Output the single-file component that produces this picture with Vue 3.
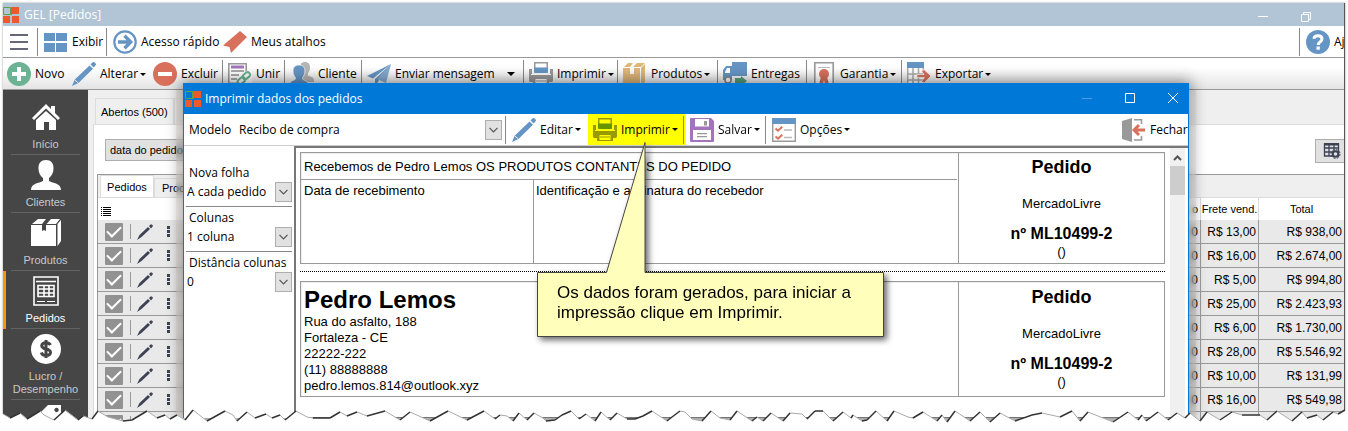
<script setup>
import { ref } from 'vue'

const actions = [
  { icon: 'plus', label: 'Novo' },
  { icon: 'pencil', label: 'Alterar', menu: true },
  { icon: 'minus', label: 'Excluir' },
  { icon: 'merge', label: 'Unir', sep: true },
  { icon: 'people', label: 'Cliente', sep: true },
  { icon: 'plane', label: 'Enviar mensagem', sep: true, menu: true, wide: true },
  { icon: 'printer', label: 'Imprimir', sep: true, menu: true },
  { icon: 'carton', label: 'Produtos', sep: true, menu: true },
  { icon: 'truck', label: 'Entregas', sep: true },
  { icon: 'seal', label: 'Garantia', sep: true, menu: true },
  { icon: 'export', label: 'Exportar', sep: true, menu: true },
]

const sections = [
  { icon: 'home', label: 'Início' },
  { icon: 'user', label: 'Clientes' },
  { icon: 'box', label: 'Produtos' },
  { icon: 'form', label: 'Pedidos', active: true },
  { icon: 'dollar', label: 'Lucro / Desempenho' },
  { icon: 'tag', label: '' },
]

const orders = [
  ['R$ 13,00', 'R$ 938,00'],
  ['R$ 16,00', 'R$ 2.674,00'],
  ['R$ 5,00', 'R$ 994,80'],
  ['R$ 25,00', 'R$ 2.423,93'],
  ['R$ 6,00', 'R$ 1.730,00'],
  ['R$ 28,00', 'R$ 5.546,92'],
  ['R$ 10,00', 'R$ 131,99'],
  ['R$ 16,00', 'R$ 549,98'],
  ['', ''],
]

const dialogActions = [
  { icon: 'pencil', label: 'Editar' },
  { icon: 'printer', label: 'Imprimir', hot: true },
  { icon: 'floppy', label: 'Salvar' },
  { icon: 'options', label: 'Opções' },
]

const settings = [
  { id: 'sheet', label: 'Nova folha', value: 'A cada pedido' },
  { id: 'cols', label: 'Colunas', value: '1 coluna' },
  { id: 'dist', label: 'Distância colunas', value: '0' },
]

const address = ['Rua do asfalto, 188', 'Fortaleza - CE', '22222-222', '(11) 88888888', 'pedro.lemos.814@outlook.xyz']

const model = ref('Recibo de compra')

const tear = '3,414 10,418 20,413 27,419 40,411 44,415 54,420 65,410 78,420 83,416 92,419 98,411 108,417 123,421 132,420 147,411 157,418 165,415 170,419 177,415 185,420 193,410 207,421 225,411 233,415 237,421 247,412 255,418 266,414 272,418 280,415 285,420 296,411 307,417 313,418 330,418 340,412 347,416 357,412 367,416 385,411 400,420 410,412 430,421 448,411 467,420 484,411 495,419 500,415 507,416 513,421 519,413 527,420 534,413 543,418 546,421 555,420 562,415 571,411 579,419 586,414 595,421 601,412 610,420 617,413 627,419 635,419 643,416 652,411 667,421 672,417 680,411 685,412 692,419 702,421 711,411 720,418 730,420 737,411 752,421 757,417 763,421 771,413 783,421 790,413 802,414 807,419 815,411 823,411 833,421 843,412 851,418 853,415 862,421 867,420 876,411 887,421 894,411 908,417 913,418 923,412 937,421 942,415 947,422 955,411 970,421 980,412 990,422 1000,413 1015,421 1032,415 1042,413 1060,417 1072,411 1080,421 1088,412 1113,422 1128,412 1138,420 1142,415 1146,421 1158,412 1168,420 1177,413 1185,418 1190,413 1200,421 1207,412 1220,420 1232,412 1242,415 1260,415 1267,420 1277,411 1292,421 1302,412 1307,418 1317,415 1323,420 1333,412 1338,414 1345,410'
  .split(' ')
  .map((p) => p.split(',').map(Number))
  .map(([x, y]) => [x, y - 407])

const tearFill = `M0 7L${tear.map((p) => p.join(' ')).join('L')}L1348 3V24H0Z`
const segments = tear.slice(1).map((p, i) => ({ d: `M${tear[i].join(' ')}L${p.join(' ')}`, up: p[1] <= tear[i][1] }))
const rising = segments.filter((s) => s.up).map((s) => s.d).join('')
const falling = segments.filter((s) => !s.up).map((s) => s.d).join('')
</script>

<template>
  <svg class="defs" aria-hidden="true">
    <symbol id="i-logo" viewBox="0 0 16 16">
      <path fill="#ec5a2b" d="M8 0h8v7H9V8H8zM0 9h7v7H0zM9 9h7v7H9z" />
      <path fill="none" stroke="#5fa04a" d="M.5.5h7v7h-7z" />
    </symbol>
    <symbol id="i-tiles" viewBox="0 0 24 24"><path fill="#6595c4" d="M0 3h11v8H0zM12 3h11v8H12zM0 13h11v9H0zM12 13h11v9H12z" /></symbol>
    <symbol id="i-go" viewBox="0 0 24 24">
      <circle cx="12" cy="12" r="10.7" fill="none" stroke="#6595c4" stroke-width="2.2" />
      <path fill="none" stroke="#6595c4" stroke-width="3.4" d="M5 12h12M11.500 5.800l6.200 6.200-6.200 6.200" />
    </symbol>
    <symbol id="i-ribbon" viewBox="0 0 24 24"><path fill="#d9705c" d="M17 1l7 6L8 23l-1.500-6L0 15.500z" /></symbol>
    <symbol id="i-help" viewBox="0 0 24 24">
      <circle cx="12" cy="12" r="12" fill="#6595c4" />
      <path fill="none" stroke="#fff" stroke-width="3" d="M8 8.800C8 6.800 9.500 5.800 12 5.800s4 1.200 4 3.200c0 3-3.800 2.800-3.800 6" />
      <path fill="#fff" d="M10.500 16.500h3.300v3.200h-3.300z" />
    </symbol>
    <symbol id="i-plus" viewBox="0 0 24 24"><circle cx="12" cy="12" r="12" fill="#6bb392" /><path fill="#fff" d="M10 5h4v5h5v4h-5v5h-4v-5H5v-4h5z" /></symbol>
    <symbol id="i-minus" viewBox="0 0 24 24"><circle cx="12" cy="12" r="12" fill="#d9705c" /><path fill="#fff" d="M5 10h14v4H5z" /></symbol>
    <symbol id="i-pencil" viewBox="0 0 24 24">
      <path fill="#6595c4" d="M17.500 3.500l3.500 3.200L6.500 21 0 24l2.600-6.200zM18.500 2.500L20.300.6c.8-.8 1.700-.7 2.500 0l.6.600c.8.800.8 1.600 0 2.400L21.700 5.500z" />
      <path stroke="#fff" stroke-width=".8" d="M2.600 17.800l3.800 3.200" />
    </symbol>
    <symbol id="i-merge" viewBox="0 0 24 24">
      <path fill="#fff" stroke="#999" stroke-width="1.600" d="M.8 1.800h17.400v19.400H.8z" />
      <path stroke="#a374b9" stroke-width="3" d="M3 5h13" />
      <path stroke="#aaa" stroke-width="2" d="M3 9h13M3 13h8M3 17h6" />
      <path fill="#fff" d="M9 24l9-15h6v15z" />
      <g fill="none" stroke="#6bb392" stroke-width="2"><rect x="14.500" y="11.500" width="8" height="5" rx="2.500" transform="rotate(-40 18 14)" /><rect x="9.500" y="16.500" width="8" height="5" rx="2.500" transform="rotate(-40 13 19)" /></g>
    </symbol>
    <symbol id="i-people" viewBox="0 0 24 24">
      <path fill="#b5b5b5" d="M15 0c3.500 0 5 2.300 5 5.500 0 3-1 4.500-2 6v2c3 1.500 6 1.500 6 5V20H11V1.500C12 .5 13.500 0 15 0z" />
      <path fill="#6595c4" stroke="#f5f5f5" stroke-width=".8" d="M9 3c4 0 6 2.500 6 6 0 3-1.200 5-2.300 6.200v2C15 19 19 19 19 24H-1c0-5 4-5 6.300-6.800v-2C4 14 3 12 3 9c0-3.500 2-6 6-6z" />
    </symbol>
    <symbol id="i-plane" viewBox="0 0 24 24"><path fill="#6595c4" d="M24 2L0 14l6 2.500zM24 2L8 17v7l3.500-5z" /><path fill="#86abd0" d="M24 2l-5 19-9-4z" /></symbol>
    <symbol id="i-printer" viewBox="0 0 24 24">
      <path fill="#999" d="M5 0h14v9H5zM0 7h3v5h18V7h3v11c0 1.500-.5 2-2 2h-2v3H4v-3H2c-1.500 0-2-.5-2-2z" />
      <path fill="#fff" d="M6.500 1.500h11V6h-11zM2 12h20v1H2zM6 17h12v5H6z" />
      <path fill="#6595c4" d="M5 5.500h14V10q0 1-1 1H6q-1 0-1-1z" />
      <path fill="none" stroke="#999" d="M7 19h10M6 16.500h12v6H6z" />
    </symbol>
    <symbol id="i-carton" viewBox="0 0 24 24">
      <path fill="#e0b679" d="M1 5L5 1h5L7 5zM10 5l4-4h8l-4 4zM0 6h7v6h4V6h6v18H0zM18 6l4-4v18l-4 4z" />
    </symbol>
    <symbol id="i-truck" viewBox="0 0 24 24">
      <path fill="#6595c4" d="M9 0h15v14H9zM0 8l3-4h6v14H0z" />
      <path fill="#fff" d="M2 10l2-4h3v5H2z" />
      <circle cx="5" cy="18" r="3" fill="#fff" stroke="#888" stroke-width="1.600" />
      <path fill="#57a07b" d="M12 16h6v-2l6 5-6 5v-3h-6z" />
    </symbol>
    <symbol id="i-seal" viewBox="0 0 24 24">
      <path fill="#fff" stroke="#999" stroke-width="1.600" d="M2.800.8h18.400v22.400H2.800z" />
      <path stroke="#bbb" d="M6 5.500h12" />
      <circle cx="12" cy="12" r="5" fill="#d9705c" /><path fill="#d9705c" d="M9 15h6l2 7-2-1-2 1-1-4-1 4-2-1-2 1z" />
    </symbol>
    <symbol id="i-export" viewBox="0 0 24 24">
      <path fill="#6595c4" d="M0 0h17v6H0z" /><path fill="#fff" d="M0 6h17v18H0z" />
      <path fill="none" stroke="#aaa" stroke-width="1.500" d="M.7 6v18M6 6v18M11.500 6v18M16.300 6v5M0 12h16M0 18h16" />
      <path fill="#d9705c" stroke="#fff" stroke-width=".7" d="M10 12.500h7L14.500 9 17 7.500l7 6.500-7 7-2.500-1.500 3-4H10z" />
    </symbol>
    <symbol id="i-floppy" viewBox="0 0 24 24">
      <path fill="#a374b9" d="M0 1q0-1 1-1h20l3 3v20q0 1-1 1H1q-1 0-1-1z" />
      <path fill="#fff" d="M5 1h14v7.500H5zM3 12h18v10H3z" />
      <path fill="#999" d="M14 3h3v4.500h-3zM7 15h10v1.200H7zM7 18h10v1.200H7z" />
    </symbol>
    <symbol id="i-options" viewBox="0 0 24 24">
      <path fill="#fff" stroke="#999" stroke-width="1.400" d="M.7 1h22.600v22.300H.7z" /><path fill="#6595c4" d="M0 0h24v6H0z" />
      <path fill="none" stroke="#d9705c" stroke-width="2" d="M3.500 10.500l2.500 2.200 4.200-4M3.500 18.500L6 20.700l4.200-4" />
      <path stroke="#bbb" stroke-width="1.300" d="M12 12h8M12 19.500h8" />
    </symbol>
    <symbol id="i-exit" viewBox="0 0 24 24">
      <path fill="#999" d="M0 3l10-3v24L0 21z" />
      <path fill="none" stroke="#999" stroke-width="1.600" d="M12 1.800h7.500V6M19.500 18v4H12" />
      <path fill="none" stroke="#d9705c" stroke-width="3" d="M13 12h10M17 7l-5 5 5 5" />
    </symbol>
    <symbol id="i-home" viewBox="0 0 30 30"><path fill="#fff" d="M15 2l5 5V4h4v7l5 5-2 2L15 6.500 3 18l-2-2zM15 9l10 9v10h-7v-8h-5v8H5V18z" /></symbol>
    <symbol id="i-user" viewBox="0 0 30 30"><path fill="#fff" d="M15 0c5 0 7.500 3 7.500 8 0 5-2 8-4.500 10v3c4 2.500 12 2 12 9H0c0-7 8-6.500 12-9v-3C9.500 16 7.500 13 7.500 8c0-5 2.500-8 7.500-8z" /></symbol>
    <symbol id="i-box" viewBox="0 0 30 30"><path fill="#fff" d="M1 6l6-5h8l-4 5zM16 5.500L20 1h9l-4 5h-9.500zM0 7h11v6l2-1 2 1V7h10v21H0zM26.500 6L30 2v21l-3.500 5z" /></symbol>
    <symbol id="i-form" viewBox="0 0 30 30">
      <path fill="none" stroke="#fff" stroke-width="1.600" d="M3 1h24v28H3zM5 5.500h20M7 9.500h16v11H7zM7 13h16M7 17h16M13 9v11M18 9v11" /><path stroke="#fff" d="M6 25.500h8M16 25.500h8" />
    </symbol>
    <symbol id="i-dollar" viewBox="0 0 30 30">
      <circle cx="15" cy="15" r="15" fill="#fff" />
      <path fill="none" stroke="#464646" stroke-width="3" d="M19.500 11c-1-1.800-2.500-2.300-4.500-2.300-2.500 0-4.300 1-4.300 3 0 4.400 8.800 2.200 8.800 6.600 0 2-2 3.200-4.500 3.200-2.200 0-4-.8-4.700-3M15 6v18" />
    </symbol>
    <symbol id="i-tag" viewBox="0 0 30 30"><path fill="#fff" fill-rule="evenodd" d="M17 0h13v12L13 29 0 17zM25.500 2.800a2.200 2.200 0 1 0 .1 0z" /></symbol>
    <symbol id="i-table" viewBox="0 0 18 18">
      <path fill="none" stroke="#3c4254" stroke-width="1.300" d="M1.500 2h14v12h-14zM6 2v12M11 2v12M1.500 6h14M1.500 10h14" /><path fill="#3c4254" d="M1 1h15v2.500H1z" />
      <circle cx="12.500" cy="12" r="2.800" fill="#e1e1e1" stroke="#3c4254" stroke-width="2" /><circle cx="12.500" cy="12" r="4.500" fill="none" stroke="#3c4254" stroke-dasharray="2 1.500" />
    </symbol>
    <symbol id="i-pen" viewBox="0 0 16 16"><path fill="#3c4254" d="M11 3L13 5 4.500 13 0 16l2.500-5zM12 2L13.500.5h1.500L16 2l-2 2.500z" /></symbol>
    <symbol id="i-chev" viewBox="0 0 9 6"><path fill="none" stroke="#555" stroke-width="1.200" d="M.5.8l4 4 4-4" /></symbol>
  </svg>

  <div class="page">
    <div class="app">
      <header class="titlebar">
        <svg class="logo"><use href="#i-logo" /></svg>
        <span class="title">GEL [Pedidos]</span>
        <svg class="winctl" viewBox="0 0 86 23"><path fill="none" stroke="#fff" d="M0 13.500h10M43.500 11.500h7v7h-7zM45.500 11.500v-2h7v7h-2" /></svg>
      </header>

      <nav class="bar top">
        <button class="tool burger" aria-label="Menu"><i></i><i></i><i></i></button>
        <button class="tool sep"><svg class="ic"><use href="#i-tiles" /></svg>Exibir</button>
        <button class="tool sep"><svg class="ic"><use href="#i-go" /></svg>Acesso rápido</button>
        <button class="tool"><svg class="ic"><use href="#i-ribbon" /></svg>Meus atalhos</button>
        <span></span>
        <button class="tool sep help"><svg class="ic"><use href="#i-help" /></svg>Aj</button>
      </nav>

      <nav class="bar actions">
        <button v-for="a in actions" :key="a.label" class="tool" :class="{ sep: a.sep }">
          <svg class="ic"><use :href="'#i-' + a.icon" /></svg>{{ a.label }}<b v-if="a.menu" class="caret" :class="{ wide: a.wide }"></b>
        </button>
      </nav>

      <div class="body">
        <aside class="side">
          <a v-for="s in sections" :key="s.icon" href="#" class="item" :class="{ active: s.active }">
            <svg class="big"><use :href="'#i-' + s.icon" /></svg>
            <span>{{ s.label }}</span>
          </a>
        </aside>

        <main class="main">
          <div class="tabs"><button class="tab">Abertos (500)</button><span class="tab stub"></span></div>
          <section class="panel">
            <div class="filters">
              <button class="filter">data do pedido</button>
              <button class="gridbtn" aria-label="Colunas"><svg><use href="#i-table" /></svg></button>
            </div>
            <div class="list">
              <div class="subtabs"><button class="sub on">Pedidos</button><button class="sub">Produtos</button></div>
              <table>
                <colgroup><col class="c-tools" /><col /><col class="c-freight" /><col class="c-total" /></colgroup>
                <thead>
                  <tr>
                    <th class="first"><svg class="lines" viewBox="0 0 10 9"><path stroke="#000" d="M0 .5h1M0 2.500h1M0 4.500h1M0 6.500h1M0 8.500h1M2 .5h8M2 2.500h8M2 4.500h8M2 6.500h8M2 8.500h8" /></svg></th>
                    <th class="num">o</th><th>Frete vend.</th><th>Total</th>
                  </tr>
                </thead>
                <tbody>
                  <tr v-for="(o, i) in orders" :key="i">
                    <td class="first">
                      <div class="rowtools">
                        <input type="checkbox" checked aria-label="Selecionar pedido" /><i></i>
                        <svg class="pen"><use href="#i-pen" /></svg><span class="dots"></span>
                      </div>
                    </td>
                    <td class="num">0</td><td class="num">{{ o[0] }}</td><td class="num">{{ o[1] }}</td>
                  </tr>
                </tbody>
              </table>
            </div>
          </section>
        </main>
      </div>
    </div>

    <section class="dialog" role="dialog" aria-label="Imprimir dados dos pedidos">
      <header class="dtitle">
        <svg class="logo"><use href="#i-logo" /></svg>
        <span>Imprimir dados dos pedidos</span>
        <svg class="winctl" viewBox="0 0 106 31"><path stroke="#4ba0e3" d="M0 15.500h10" /><path fill="none" stroke="#fff" d="M43.500 10.500h9v9h-9zM86 10l10 10M96 10l-10 10" /></svg>
      </header>
      <div class="dbar">
        <label for="model">Modelo</label>
        <div class="pick model">
          <select id="model" v-model="model"><option>Recibo de compra</option></select>
          <span class="drop"><svg><use href="#i-chev" /></svg></span>
        </div>
        <button v-for="a in dialogActions" :key="a.label" class="tool sep" :class="{ hot: a.hot }">
          <svg class="ic"><use :href="'#i-' + a.icon" /></svg>{{ a.label }}<b class="caret"></b>
        </button>
        <span></span>
        <button class="tool close"><svg class="ic"><use href="#i-exit" /></svg>Fechar</button>
      </div>

      <div class="dbody">
        <form class="form">
          <div v-for="s in settings" :key="s.id" class="group">
            <label :for="s.id">{{ s.label }}</label>
            <div class="pick">
              <select :id="s.id"><option>{{ s.value }}</option></select>
              <span class="drop"><svg><use href="#i-chev" /></svg></span>
            </div>
          </div>
        </form>
        <div class="preview">
          <div class="sheet">
            <div class="receipt">
              <div class="left">
                <p class="line">Recebemos de Pedro Lemos OS PRODUTOS CONTANTES DO PEDIDO</p>
                <div class="split"><p>Data de recebimento</p><p>Identificação e assinatura do recebedor</p></div>
              </div>
              <div class="order"><h3>Pedido</h3><p>MercadoLivre</p><h4>nº ML10499-2</h4><p>()</p></div>
            </div>
            <hr />
            <div class="receipt second">
              <div class="left who"><h2>Pedro Lemos</h2><p v-for="l in address" :key="l">{{ l }}</p></div>
              <div class="order"><h3>Pedido</h3><p>MercadoLivre</p><h4>nº ML10499-2</h4><p>()</p></div>
            </div>
          </div>
          <div class="scroll">
            <svg viewBox="0 0 15 18"><path fill="none" stroke="#555" stroke-width="2" d="M4 12l3.500-3.500L11 12" /></svg>
            <div class="thumb"></div>
          </div>
        </div>
      </div>
    </section>

    <div class="callout">
      <svg viewBox="0 0 350 200"><path d="M.5 130.500H69.500L108 .5V130.500H346.500V194.500H.5Z" /></svg>
      <p>Os dados foram gerados, para iniciar a impressão clique em Imprimir.</p>
    </div>

    <svg class="tear" viewBox="0 0 1348 24" preserveAspectRatio="none">
      <path class="fill" :d="tearFill" /><path class="falling" :d="falling" /><path class="rising" :d="rising" />
    </svg>
  </div>
</template>

<style>
body { background: #fff; }
</style>

<style scoped>
* { box-sizing: border-box; }
p, h2, h3, h4 { margin: 0; }
button, select { font: inherit; color: inherit; background: none; border: 0; padding: 0; margin: 0; white-space: nowrap; }
.defs { position: absolute; width: 0; height: 0; }
.page { position: relative; height: 100vh; min-height: 431px; padding: 3px 3px 0; overflow: hidden; background: #fff; font: 12px/16px "Open Sans", "Noto Sans", sans-serif; color: #000; }
.app { display: flex; flex-direction: column; height: 100%; overflow: hidden; border-right: 1px solid #555; box-shadow: 0 0 2px #999; }

.titlebar { display: flex; align-items: center; flex: none; height: 23px; background: #b1c5d7; color: #fff; }
.logo { width: 16px; height: 16px; flex: none; }
.title { margin-left: 5px; flex: 1; }
.winctl { flex: none; width: 86px; height: 23px; }

.bar { display: grid; flex: none; height: 32px; border-bottom: 1px solid #999; background: #fff; overflow: hidden; }
.top { grid-template-columns: 34px 69px 110px 110px 1fr 45px; }
.actions { grid-template-columns: 63px 81px 75px 62px 77px 162px 94px 100px 89px 95px 100px; background: linear-gradient(#fff 30%, #e4e4e4); }
.tool { display: flex; align-items: center; gap: 4px; height: 28px; margin-top: 2px; padding-left: 6px; border-left: 1px solid transparent; }
.tool.sep { border-left-color: #888; }
.tool.burger { flex-direction: column; align-items: flex-start; justify-content: center; gap: 5px; }
.burger i { width: 18px; height: 2px; background: #666a78; }
.actions .tool:first-child { padding-left: 3px; }
.actions .tool { padding-left: 5px; }
.ic { width: 24px; height: 24px; flex: none; }
.caret { flex: none; border: 3px solid transparent; border-top-color: #000; border-bottom: 0; margin-left: -2px; }
.caret.wide { border-width: 4px 4px 0; margin-left: 8px; }
.help { overflow: hidden; }

.body { display: flex; flex: 1; min-height: 0; }
.side { flex: none; width: 85px; padding-top: 7px; background: #464646; overflow: hidden; }
.item { display: flex; flex-direction: column; align-items: center; position: relative; min-height: 58px; padding: 5px 7px 4px; color: #c9c9c9; text-decoration: none; text-align: center; font: 11px/13px "Liberation Sans", Arial, sans-serif; }
.item::after { content: ""; position: absolute; left: 8px; right: 8px; bottom: 0; height: 1px; background: #626262; }
.item.active { color: #fff; border-left: 3px solid #ff9800; padding-left: 4px; }
.item.active::after { left: 5px; }
.big { width: 30px; height: 30px; margin-bottom: 6px; flex: none; }

.main { flex: 1; min-width: 0; padding: 8px 0 0 5px; background: #efefef; font: 11px/14px "Liberation Sans", Arial, sans-serif; }
.tabs { display: flex; height: 26px; padding-left: 2px; }
.tab { padding: 0 5px; border: 1px solid #dcdcdc; border-bottom: 0; }
.tab.stub { width: 60px; }
.panel { border-top: 1px solid #dcdcdc; border-left: 1px solid #dcdcdc; background: #fff; padding-left: 3px; }
.filters { display: flex; justify-content: space-between; height: 49px; padding: 14px 0 0 8px; }
.filter { width: 100px; height: 22px; padding-left: 4px; text-align: left; background: #e1e1e1; border: 1px solid #adadad; }
.gridbtn { width: 29px; height: 24px; background: #e1e1e1; border: 1px solid #adadad; border-right: 0; padding: 2px 0 0 7px; text-align: left; }
.gridbtn svg { width: 18px; height: 18px; }
.list { border: solid #999; border-width: 1px 0 0 1px; background: #efefef; }
.subtabs { display: flex; align-items: flex-end; height: 23px; padding-left: 2px; border-bottom: 1px solid #dcdcdc; }
.sub { height: 19px; width: 60px; border: 1px solid #dcdcdc; border-bottom: 0; }
.sub.on { height: 22px; width: 54px; background: #fff; }
table { width: 100%; table-layout: fixed; border-collapse: separate; border-spacing: 0; }
.c-tools { width: 90px; }
.c-freight { width: 58px; }
.c-total { width: 85px; }
th { height: 22px; padding: 0; font-weight: normal; text-align: center; background: #fff; border-right: 1px solid #dcdcdc; white-space: nowrap; }
th.first { text-align: left; padding-left: 3px; border-right: 0; }
td { height: 24px; padding: 0; font-size: 12px; background: #e9e9e9; border-bottom: 1px solid #999; border-right: 1px solid #999; white-space: nowrap; }
td.first { border-right: 0; }
td:last-child, th:last-child { border-right: 0; }
.num { text-align: right; padding-right: 2px; }
.lines { display: block; width: 10px; height: 9px; margin-top: 4px; }
.rowtools { display: flex; align-items: center; padding-left: 7px; }
.rowtools input { appearance: none; width: 18px; height: 18px; margin: 0 7px 0 0; background: #929292; border-radius: 1px; display: grid; place-items: center; }
.rowtools input::after { content: ""; width: 12px; height: 6px; border: solid #fff; border-width: 0 0 2px 2px; transform: rotate(-45deg); margin-bottom: 4px; }
.rowtools i { width: 1px; height: 15px; background: #999; margin-right: 6px; }
.pen { width: 16px; height: 16px; margin-right: 14px; }
.dots { width: 3px; height: 11px; background: repeating-linear-gradient(#3c4254 0 3px, transparent 3px 4px); }

.dialog { position: absolute; left: 183px; right: 159px; top: 83px; bottom: 13px; display: flex; flex-direction: column; background: #fff; border: solid #0078d7; border-width: 0 1px; box-shadow: 0 0 14px 2px rgba(0, 0, 0, .45); }
.dialog::before, .dialog::after { content: ""; position: absolute; top: 7px; bottom: 0; width: 7px; backdrop-filter: blur(3px); }
.dialog::before { left: -8px; }
.dialog::after { right: -8px; }
.dtitle { display: flex; align-items: center; flex: none; height: 31px; padding-left: 1px; gap: 4px; background: #0078d7; color: #fff; }
.dtitle span { flex: 1; }
.dtitle .winctl { width: 106px; height: 31px; }
.dbar { display: grid; grid-template-columns: 50px 271px 81px 97px 82px 90px 1fr 72px; align-items: center; flex: none; height: 32px; border-bottom: 1px solid #ccc; }
.dbar label { padding-left: 5px; }
.dbar .tool { margin-top: 0; }
.dbar .hot { background: #ff0; height: 31px; width: 98px; border-left: 0; margin-left: 2px; padding-left: 5px; }
.dbar .hot .ic { mix-blend-mode: multiply; }
.dbar .hot + .tool { z-index: 1; }
.dbar .close { padding-left: 5px; }
.pick { display: grid; align-items: center; }
.pick select, .drop { grid-area: 1 / 1; }
.pick select { appearance: none; width: 100%; height: 20px; padding-left: 3px; }
.model select { padding-left: 5px; }
.drop { justify-self: end; display: grid; place-items: center; width: 17px; height: 20px; background: #e1e1e1; border: 1px solid #adadad; pointer-events: none; }
.drop svg { width: 9px; height: 6px; }
.model { padding-right: 3px; }

.dbody { display: flex; flex: 1; min-height: 0; }
.form { flex: none; width: 110px; padding: 15px 2px 0 2px; }
.group { height: 45px; padding-top: 3px; }
.group + .group { border-top: 1px solid #888; padding-top: 2px; }
.group label { display: block; padding-left: 3px; height: 18px; line-height: 18px; }
.group select { padding-left: 1px; }
.preview { display: flex; flex: 1; min-width: 0; border: solid #777; border-width: 2px 0 1px 2px; overflow: hidden; background: #fff; font: 13px/16px "Liberation Sans", Arial, sans-serif; }
.sheet { flex: 1; min-width: 0; padding: 4px 5px 0 4px; }
.receipt { display: grid; grid-template-columns: 1fr 206px; height: 112px; border: 1px solid #999; box-shadow: inset 1px 1px #eee; }
.second { height: 116px; }
.left { display: flex; flex-direction: column; padding: 0 1px 0 0; min-width: 0; }
.line { height: 27px; padding: 6px 3px 0; border-bottom: 1px solid #999; }
.split { display: grid; grid-template-columns: 232px 1fr; flex: 1; }
.split p { padding: 3px 2px 0 3px; }
.split p + p { border-left: 1px solid #999; padding-left: 2px; }
.order { border-left: 1px solid #999; text-align: center; padding-top: 3px; }
.order h3 { font-size: 18px; line-height: 22px; margin-bottom: 18px; }
.order h4 { font-size: 16px; line-height: 18px; margin: 13px 0 1px; }
.second .order { padding-top: 4px; }
hr { border: 0; border-top: 1px dotted #000; margin: 7px 0 9px; }
.who { padding: 3px 3px 0; }
.who h2 { font-size: 24px; line-height: 29px; }
.scroll { flex: none; width: 18px; border-right: 3px solid #fff; background: #f0f0f0; }
.scroll svg { display: block; width: 15px; height: 18px; }
.thumb { height: 29px; background: #cdcdcd; }

.callout { position: absolute; left: 537px; top: 142px; width: 350px; height: 200px; font: 17px/20px "Liberation Sans", Arial, sans-serif; }
.callout svg { position: absolute; inset: 0; width: 350px; height: 200px; overflow: visible; filter: drop-shadow(3px 3px 3px rgba(0, 0, 0, .6)); }
.callout path { fill: #ffffbb; stroke: #444; }
.callout p { position: relative; padding: 141px 20px 0 20px; }

.tear { position: absolute; left: 0; bottom: 0; width: 100%; height: 24px; }
.tear path { fill: none; }
.tear .fill { fill: #fff; }
.tear .rising { stroke: #333; stroke-width: 1.5; }
.tear .falling { stroke: #aaa; }
</style>
